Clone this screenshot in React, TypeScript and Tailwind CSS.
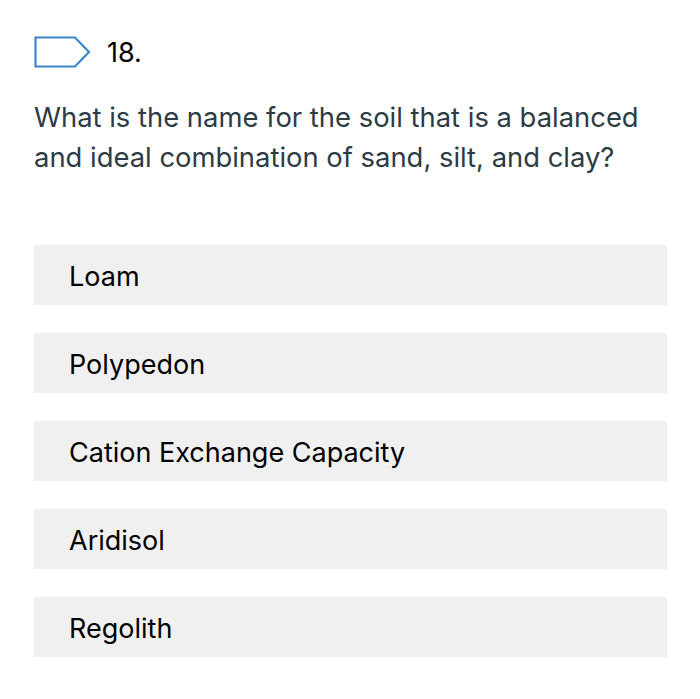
import React from 'react';

const options = ['Loam', 'Polypedon', 'Cation Exchange Capacity', 'Aridisol', 'Regolith'];

export default function App() {
  return (
    <div
      className="w-[700px] h-[699px] bg-white pl-[34px] pr-[33px] pt-[36px]"
      style={{ fontFamily: 'Inter, Roboto, "Noto Sans", "Liberation Sans", sans-serif' }}
    >
      {/* Question header */}
      <div className="flex items-center gap-[16px] h-[32px]">
        <svg width="57" height="32" viewBox="0 0 57 32" className="shrink-0">
          <path d="M1.5 1.5 H41 L55 16 L41 30.5 H1.5 Z" fill="none" stroke="#3a86c8" strokeWidth="2.2" strokeLinejoin="miter" />
        </svg>
        <span className="text-[27px] text-black leading-none">18.</span>
      </div>

      <p className="mt-[29px] text-[27.4px] leading-[40px] text-[#2d3b45]">
        What is the name for the soil that is a balanced and ideal combination of sand, silt, and clay?
      </p>

      {/* Answers */}
      <div className="mt-[68px] flex flex-col gap-[28px]">
        {options.map(o => (
          <div key={o} className="h-[60px] bg-[#f0f0f0] flex items-center pl-[35px] pt-[5px] text-[27px] text-black">
            {o}
          </div>
        ))}
      </div>
    </div>
  );
}
